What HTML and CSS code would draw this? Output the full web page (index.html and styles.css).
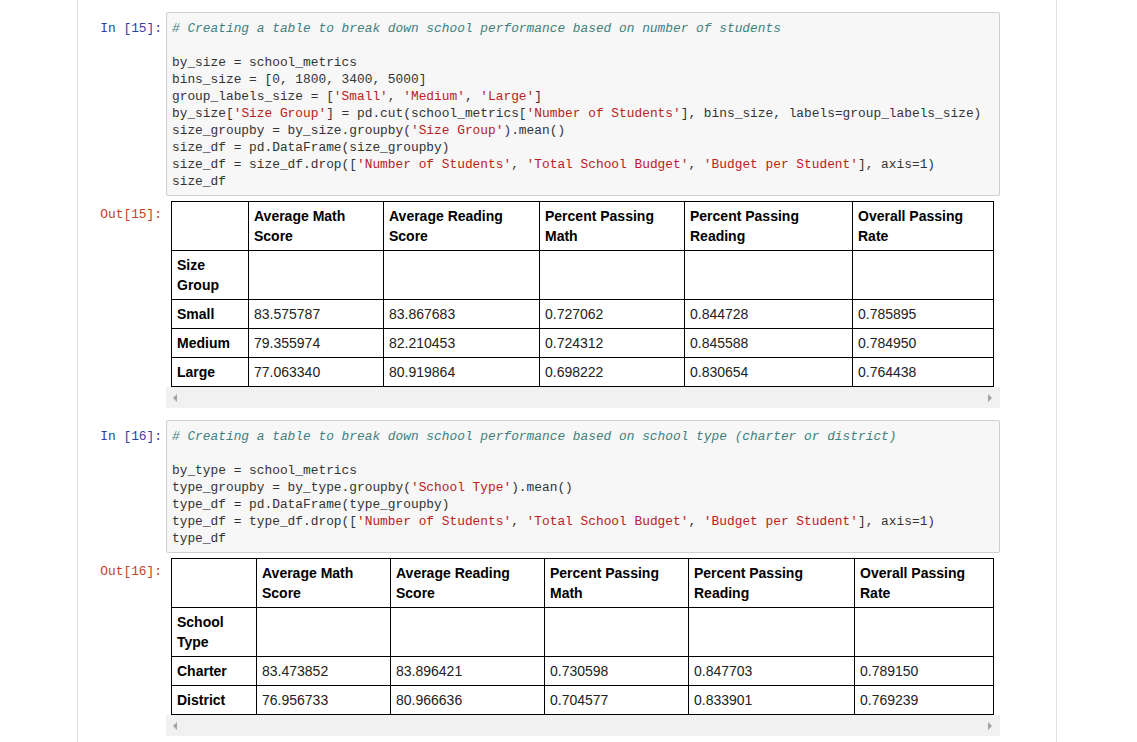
FILE: index.html
```html
<!DOCTYPE html>
<html>
<head>
<meta charset="utf-8">
<link rel="stylesheet" href="styles.css">
</head>
<body>
<div class="notebook">
  <div class="cell">
    <div class="row">
      <div class="prompt in">In&nbsp;[15]:</div>
      <pre class="code"><span class="c"># Creating a table to break down school performance based on number of students</span>

by_size = school_metrics
bins_size = [0, 1800, 3400, 5000]
group_labels_size = [<span class="s">'Small'</span>, <span class="s">'Medium'</span>, <span class="s">'Large'</span>]
by_size[<span class="s">'Size Group'</span>] = pd.cut(school_metrics[<span class="s">'Number of Students'</span>], bins_size, labels=group_labels_size)
size_groupby = by_size.groupby(<span class="s">'Size Group'</span>).mean()
size_df = pd.DataFrame(size_groupby)
size_df = size_df.drop([<span class="s">'Number of Students'</span>, <span class="s">'Total School Budget'</span>, <span class="s">'Budget per Student'</span>], axis=1)
size_df</pre>
    </div>
    <div class="row out-row">
      <div class="prompt out">Out[15]:</div>
      <div class="output">
        <table class="df t1">
          <colgroup><col><col><col><col><col><col></colgroup>
          <thead>
            <tr><th></th><th>Average Math Score</th><th>Average Reading Score</th><th>Percent Passing Math</th><th>Percent Passing Reading</th><th>Overall Passing Rate</th></tr>
            <tr><th>Size Group</th><th></th><th></th><th></th><th></th><th></th></tr>
          </thead>
          <tbody>
            <tr><th>Small</th><td>83.575787</td><td>83.867683</td><td>0.727062</td><td>0.844728</td><td>0.785895</td></tr>
            <tr><th>Medium</th><td>79.355974</td><td>82.210453</td><td>0.724312</td><td>0.845588</td><td>0.784950</td></tr>
            <tr><th>Large</th><td>77.063340</td><td>80.919864</td><td>0.698222</td><td>0.830654</td><td>0.764438</td></tr>
          </tbody>
        </table>
        <div class="hscroll"><span class="arrow left"></span><span class="arrow right"></span></div>
      </div>
    </div>
  </div>

  <div class="cell">
    <div class="row">
      <div class="prompt in">In&nbsp;[16]:</div>
      <pre class="code"><span class="c"># Creating a table to break down school performance based on school type (charter or district)</span>

by_type = school_metrics
type_groupby = by_type.groupby(<span class="s">'School Type'</span>).mean()
type_df = pd.DataFrame(type_groupby)
type_df = type_df.drop([<span class="s">'Number of Students'</span>, <span class="s">'Total School Budget'</span>, <span class="s">'Budget per Student'</span>], axis=1)
type_df</pre>
    </div>
    <div class="row out-row">
      <div class="prompt out">Out[16]:</div>
      <div class="output">
        <table class="df t2">
          <colgroup><col><col><col><col><col><col></colgroup>
          <thead>
            <tr><th></th><th>Average Math Score</th><th>Average Reading Score</th><th>Percent Passing Math</th><th>Percent Passing Reading</th><th>Overall Passing Rate</th></tr>
            <tr><th>School Type</th><th></th><th></th><th></th><th></th><th></th></tr>
          </thead>
          <tbody>
            <tr><th>Charter</th><td>83.473852</td><td>83.896421</td><td>0.730598</td><td>0.847703</td><td>0.789150</td></tr>
            <tr><th>District</th><td>76.956733</td><td>80.966636</td><td>0.704577</td><td>0.833901</td><td>0.769239</td></tr>
          </tbody>
        </table>
        <div class="hscroll"><span class="arrow left"></span><span class="arrow right"></span></div>
      </div>
    </div>
  </div>
</div>
</body>
</html>
```

FILE: styles.css
```css
html, body {
  margin: 0;
  padding: 0;
  background: #fff;
}

.notebook {
  margin-left: 77px;
  width: 978px;
  min-height: 742px;
  border-left: 1px solid #e2e2e2;
  border-right: 1px solid #e2e2e2;
}

.cell {
  padding-top: 12px;
}

.row {
  display: flex;
  align-items: flex-start;
}

.prompt {
  flex: none;
  width: 84px;
  padding-right: 4px;
  text-align: right;
  font-family: "Liberation Mono", "DejaVu Sans Mono", monospace;
  font-size: 12.85px;
  line-height: 17px;
}

.prompt.in {
  color: #303f9f;
  padding-top: 8px;
}

.prompt.out {
  color: #c2412b;
  padding-top: 5px;
}

.code {
  margin: 0;
  width: 822px;
  padding: 7px 5px 5px 5px;
  background: #f7f7f7;
  border: 1px solid #cfcfcf;
  border-radius: 2px;
  font-family: "Liberation Mono", "DejaVu Sans Mono", monospace;
  font-size: 12.85px;
  line-height: 17px;
  color: #333;
  white-space: pre;
}

.code .c {
  color: #408080;
  font-style: italic;
}

.code .s {
  color: #ba2121;
}

.out-row {
  margin-top: 5px;
}

.output {
  width: 834px;
}

.df {
  margin-left: 5px;
  border-collapse: collapse;
  table-layout: fixed;
  width: 822px;
  font-family: "Liberation Sans", Arial, sans-serif;
  font-size: 14px;
  line-height: 20px;
  color: #222;
}

.df th, .df td {
  border: 1px solid #000;
  padding: 4px 5px;
  text-align: left;
  vertical-align: middle;
}

.df th {
  font-weight: bold;
  color: #000;
}

.t1 col:nth-child(1) { width: 77px; }
.t1 col:nth-child(2) { width: 135px; }
.t1 col:nth-child(3) { width: 156px; }
.t1 col:nth-child(4) { width: 145px; }
.t1 col:nth-child(5) { width: 168px; }
.t1 col:nth-child(6) { width: 141px; }

.t2 col:nth-child(1) { width: 85px; }
.t2 col:nth-child(2) { width: 134px; }
.t2 col:nth-child(3) { width: 154px; }
.t2 col:nth-child(4) { width: 144px; }
.t2 col:nth-child(5) { width: 166px; }
.t2 col:nth-child(6) { width: 139px; }

.hscroll {
  height: 21px;
  background: #f1f1f1;
  display: flex;
  align-items: center;
  justify-content: space-between;
  padding: 0 8px 0 7px;
}

.arrow {
  width: 0;
  height: 0;
  border-top: 4px solid transparent;
  border-bottom: 4px solid transparent;
}

.arrow.left {
  border-right: 4px solid #a3a3a3;
}

.arrow.right {
  border-left: 4px solid #a3a3a3;
}
```
